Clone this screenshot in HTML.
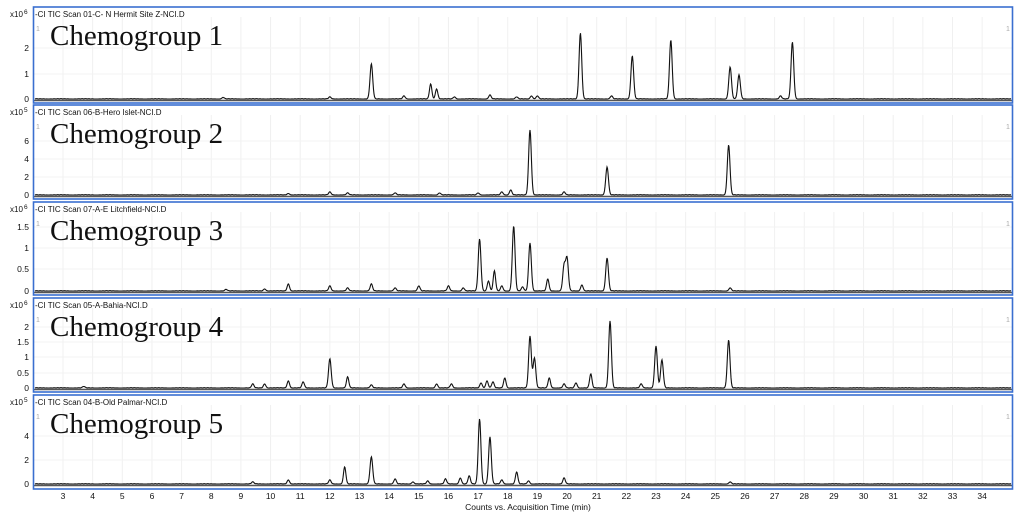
<!DOCTYPE html>
<html><head><meta charset="utf-8">
<style>
body{margin:0;width:1024px;height:516px;background:#fff;overflow:hidden;font-family:"Liberation Sans",sans-serif;}
svg{position:absolute;left:0;top:0}
</style></head><body>
<svg id="s" width="1024" height="516" xmlns="http://www.w3.org/2000/svg" font-family="Liberation Sans, sans-serif"></svg>
<script>
var S=document.getElementById('s');var h='';
function X(t){return 63+(t-3)*29.65;}
var panels=[
 {top:7,bot:103,base:99,exp:'6',title:'-CI TIC Scan 01-C- N Hermit Site Z-NCI.D',name:'Chemogroup 1',
  ticks:[[2,48],[1,74],[0,99]],
  pk:[[13.4,35],[15.4,15],[15.6,10],[20.45,66],[22.2,43],[23.5,59],[25.5,32],[25.8,24],[27.6,57],[17.4,4],[18.8,3],[19,3],[14.5,3],[8.4,1.5],[12,2],[16.2,2],[18.3,2],[21.5,3],[27.2,3]]},
 {top:105,bot:199,base:195,exp:'5',title:'-CI TIC Scan 06-B-Hero Islet-NCI.D',name:'Chemogroup 2',
  ticks:[[6,141],[4,159],[2,177],[0,195]],
  pk:[[18.75,65],[21.35,28],[25.45,50],[12,3],[17.8,3],[18.1,5],[17,2],[19.9,3],[14.2,2],[12.6,2],[10.6,1.5],[15.7,2]]},
 {top:202,bot:295,base:291,exp:'6',title:'-CI TIC Scan 07-A-E Litchfield-NCI.D',name:'Chemogroup 3',
  ticks:[['1.5',227],['1',248],['0.5',269],['0',291]],
  pk:[[17.05,52],[17.55,20],[18.2,65],[18.75,48],[19.35,12],[19.9,25],[20.0,32],[21.35,33],[10.6,7],[13.4,7],[12,5],[15,5],[16,5],[16.5,3],[17.35,10],[20.5,6],[25.5,3],[12.6,3],[14.2,3],[17.8,5],[18.5,4],[9.8,2],[8.5,1.5]]},
 {top:298,bot:392,base:388,exp:'6',title:'-CI TIC Scan 05-A-Bahia-NCI.D',name:'Chemogroup 4',
  ticks:[[2,327],['1.5',342],[1,357],['0.5',373],[0,388]],
  pk:[[12,29],[12.6,11],[10.6,7],[11.1,6],[9.8,4],[9.4,4],[18.75,52],[18.9,30],[21.45,67],[23,42],[23.2,28],[25.45,48],[20.8,14],[19.4,10],[17.3,7],[17.9,10],[22.5,4],[14.5,4],[15.6,4],[16.1,4],[17.1,5],[17.5,6],[19.9,4],[20.3,5],[13.4,3],[3.7,1.5]]},
 {top:395,bot:489,base:484,exp:'5',title:'-CI TIC Scan 04-B-Old Palmar-NCI.D',name:'Chemogroup 5',
  ticks:[[4,436],[2,460],[0,484]],
  pk:[[17.05,65],[17.4,47],[13.4,27],[12.5,17],[18.3,12],[16.7,8],[16.4,6],[15.9,5],[14.2,5],[19.9,6],[12,4],[10.6,4],[18.7,3],[17.8,4],[15.3,3],[14.8,2],[9.4,2],[25.5,2]]}
];
panels.forEach(function(p){
 for(var t=3;t<=34;t++){var x=X(t);h+='<line x1="'+x+'" y1="'+(p.top+10)+'" x2="'+x+'" y2="'+p.base+'" stroke="#f0f0f0" stroke-width="1"/>';}
 p.ticks.forEach(function(k){h+='<line x1="34" y1="'+k[1]+'" x2="1012" y2="'+k[1]+'" stroke="#f3f3f3"/>';
  h+='<text x="29" y="'+(k[1]+3)+'" font-size="8.5" text-anchor="end" fill="#111">'+k[0]+'</text>';});
 var pts=[];
 for(var x=35;x<=1011;x+=0.5){var t=3+(x-63)/29.65;var y=0;
  p.pk.forEach(function(q){var w=q[1]>20?0.045:0.04;var d=(t-q[0])/w;y+=q[1]*Math.exp(-d*d/2);});
  y+=0.3*Math.abs(Math.sin(x*0.9)*Math.sin(x*0.13));
  pts.push(x.toFixed(1)+','+(p.base-y).toFixed(1));}
 h+='<polyline points="'+pts.join(' ')+'" fill="none" stroke="#111" stroke-width="1.1"/>';
 h+='<line x1="34" y1="'+(p.base+1.5)+'" x2="1012" y2="'+(p.base+1.5)+'" stroke="#555" stroke-width="1.5"/>';
 h+='<rect x="33.5" y="'+p.top+'" width="979" height="'+(p.bot-p.top)+'" fill="none" stroke="#3a6fd0" stroke-width="1.6"/>';
 h+='<text x="10" y="'+(p.top+10)+'" font-size="8" fill="#111">x10</text><text x="24" y="'+(p.top+7)+'" font-size="6.5" fill="#111">'+p.exp+'</text>';
 h+='<text x="35" y="'+(p.top+10)+'" font-size="8" fill="#111">'+p.title+'</text>';
 h+='<text x="36" y="'+(p.top+24)+'" font-size="7" fill="#aaa">1</text><text x="1006" y="'+(p.top+24)+'" font-size="7" fill="#aaa">1</text>';
 h+='<text x="50" y="'+(p.top+38)+'" font-size="29" font-family="Liberation Serif, serif" fill="#111">'+p.name+'</text>';
});
for(var t=3;t<=34;t++){h+='<text x="'+X(t)+'" y="499" font-size="8.5" text-anchor="middle" fill="#111">'+t+'</text>';}
h+='<text x="528" y="510" font-size="8.5" text-anchor="middle" fill="#111">Counts vs. Acquisition Time (min)</text>';
S.innerHTML=h;
</script>
</body></html>
